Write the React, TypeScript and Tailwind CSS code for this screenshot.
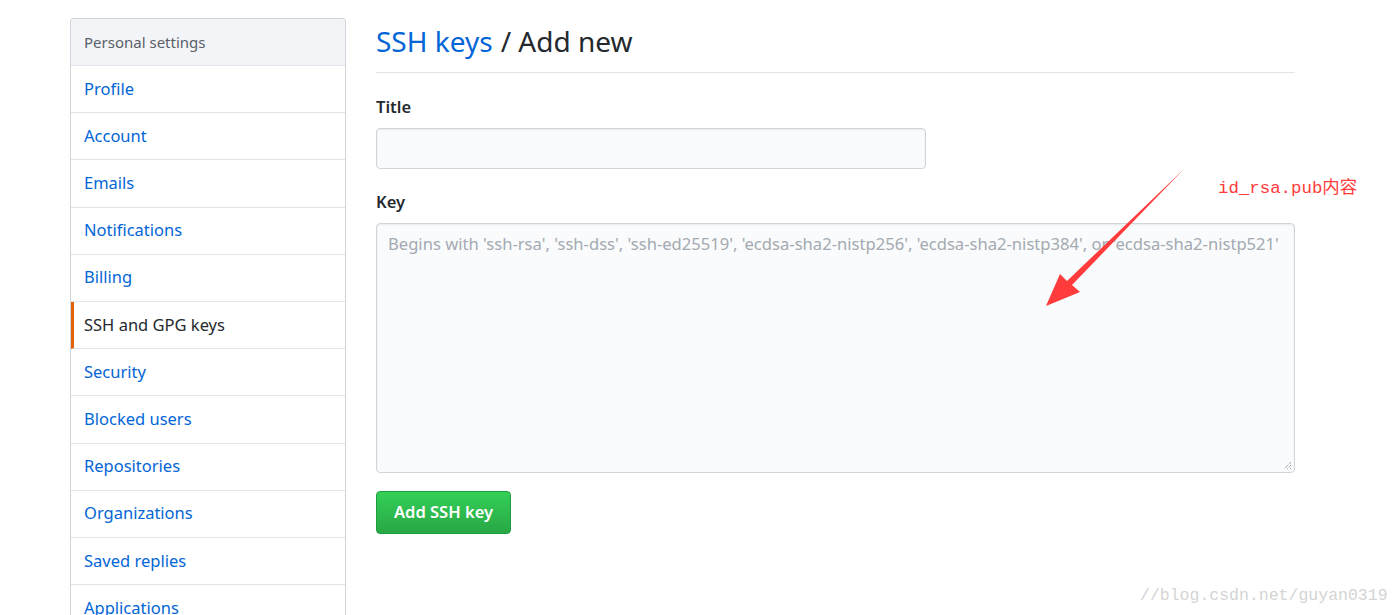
const menu = [
  "Profile",
  "Account",
  "Emails",
  "Notifications",
  "Billing",
  "SSH and GPG keys",
  "Security",
  "Blocked users",
  "Repositories",
  "Organizations",
  "Saved replies",
  "Applications",
];

const App = () => {
  return (
    <div className="relative h-[615px] w-[1399px] overflow-hidden bg-white font-['Noto_Sans',sans-serif] text-[#24292e]">
      <div className="flex pt-[18px] pl-[70px]">
        {/* sidebar */}
        <div className="w-[276px] shrink-0 rounded-t-[4px] border border-b-0 border-[#d1d5da]">
          <div className="flex h-[47px] items-center rounded-t-[4px] border-b border-[#e1e4e8] bg-[#f3f4f7] px-[13px] text-[15px] text-[#586069]">
            Personal settings
          </div>
          {menu.map((m) => {
            const active = m === "SSH and GPG keys";
            return (
              <div
                key={m}
                className={`flex h-[47.2px] items-center border-b border-[#e1e4e8] text-[16.5px] ${
                  active
                    ? "border-l-[3px] border-l-[#e36209] pl-[10px] text-[#24292e]"
                    : "pl-[13px] text-[#0366d6]"
                }`}
              >
                {m}
              </div>
            );
          })}
        </div>

        {/* main */}
        <div className="ml-[30px] w-[919px]">
          <div className="flex h-[55px] items-center border-b border-[#e1e4e8] pb-[8px] text-[28px]">
            <span className="text-[#0366d6]">SSH keys</span>
            <span className="ml-[8px]">/ Add new</span>
          </div>
          <div className="mt-[22px] text-[16.5px] font-semibold">Title</div>
          <div className="mt-[8px] h-[41px] w-[550px] rounded-[4px] border border-[#d1d5da] bg-[#fafbfc] shadow-[inset_0_1px_2px_rgba(27,31,35,0.075)]"></div>
          <div className="mt-[21px] text-[16.5px] font-semibold">Key</div>
          <div className="relative mt-[8px] h-[250px] w-[919px] rounded-[4px] border border-[#d1d5da] bg-[#fafbfc] px-[11px] pt-[8px] text-[16.6px] text-[#a3aab1] shadow-[inset_0_1px_2px_rgba(27,31,35,0.075)]">
            Begins with 'ssh-rsa', 'ssh-dss', 'ssh-ed25519', 'ecdsa-sha2-nistp256', 'ecdsa-sha2-nistp384', or 'ecdsa-sha2-nistp521'
            <svg className="absolute right-[2px] bottom-[2px]" width="9" height="9" viewBox="0 0 9 9">
              <path d="M8 1L1 8M8 4L4 8M8 7L7 8" stroke="#777" strokeWidth="1" strokeDasharray="1 1" />
            </svg>
          </div>
          <button className="mt-[18px] flex h-[43px] w-[135px] items-center justify-center rounded-[4px] border border-[#1f9c3d] bg-gradient-to-b from-[#34d058] to-[#28a745] text-[16.5px] font-semibold text-white">
            Add SSH key
          </button>
        </div>
      </div>

      {/* annotation */}
      <div className="absolute left-[1218px] top-[176px] font-['Liberation_Mono','Noto_Sans_CJK_SC',monospace] text-[17.4px] text-[#ff3b3b]">
        id_rsa.pub内容
      </div>
      <svg className="absolute left-0 top-0" width="1399" height="615" viewBox="0 0 1399 615">
        <path d="M1184 169 L1072 285 L1080 292 L1046 306 L1060 274 L1067 281 Z" fill="#ff3b3b" />
      </svg>
      <div className="absolute left-[1140px] top-[584px] font-['Liberation_Mono','Noto_Sans_CJK_SC',monospace] text-[16.5px] text-[#d4d4d4]">
        //blog.csdn.net/guyan0319
      </div>
    </div>
  );
};

export default App;
